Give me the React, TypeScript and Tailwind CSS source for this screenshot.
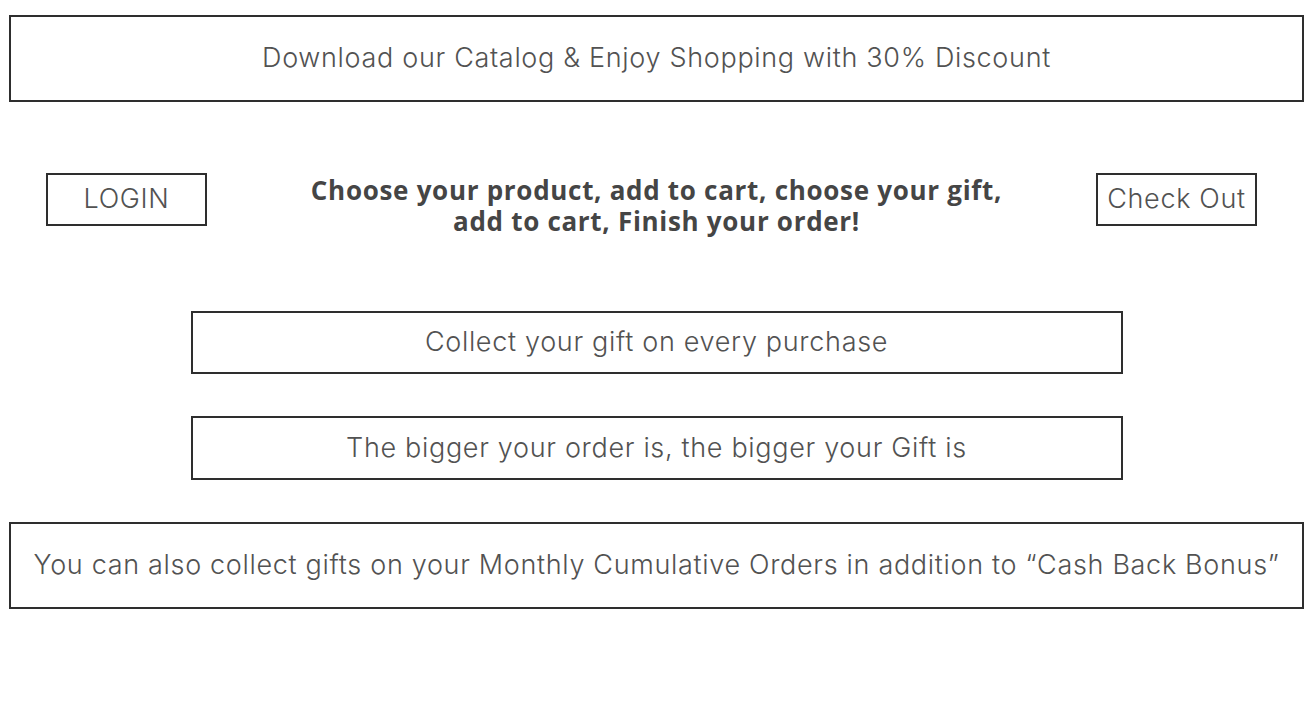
import * as React from "react";

const light = { fontFamily: "Inter, 'Open Sans', sans-serif" };
const bold = { fontFamily: "'Open Sans', Inter, sans-serif" };

function Banner({
  children,
  className,
}: {
  children: React.ReactNode;
  className?: string;
}) {
  return (
    <div
      className={`flex items-center justify-center border-2 border-[#2e2e2e] bg-white text-[27px] font-light tracking-[0.025em] text-[#525252] ${className ?? ""}`}
      style={light}
    >
      {children}
    </div>
  );
}

export default function App() {
  return (
    <div className="h-[704px] w-[1313px] bg-white">
      <div className="pt-[15px]">
        <Banner className="mx-[9px] h-[87px]">
          Download our Catalog &amp; Enjoy Shopping with 30% Discount
        </Banner>
      </div>

      <div className="mt-[71px] grid grid-cols-[1fr_auto_1fr] items-start">
        <div className="pl-[46px]">
          <Banner className="h-[53px] w-[161px]">LOGIN</Banner>
        </div>
        <p
          className="pt-[2px] text-center text-[26px] font-bold leading-[31px] tracking-[0.7px] text-[#454545]"
          style={bold}
        >
          Choose your product, add to cart, choose your gift,
          <br />
          add to cart, Finish your order!
        </p>
        <div className="flex justify-end pr-[56px]">
          <Banner className="h-[53px] w-[161px]">Check Out</Banner>
        </div>
      </div>

      <div className="mt-[74px] flex flex-col items-center gap-[42px]">
        <Banner className="h-[63px] w-[932px]">
          Collect your gift on every purchase
        </Banner>
        <Banner className="h-[64px] w-[932px]">
          The bigger your order is, the bigger your Gift is
        </Banner>
      </div>

      <Banner className="mx-[9px] mt-[42px] h-[87px]">
        You can also collect gifts on your Monthly Cumulative Orders in
        addition to “Cash Back Bonus”
      </Banner>
    </div>
  );
}
